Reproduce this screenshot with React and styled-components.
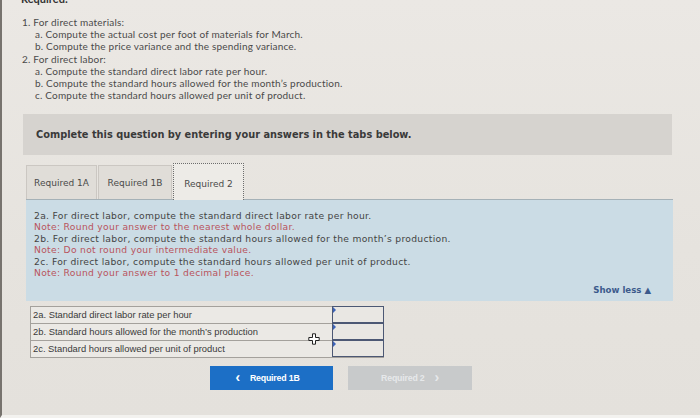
import React from 'react';
import styled, { createGlobalStyle } from 'styled-components';

const GlobalStyle = createGlobalStyle`
  html, body {
    margin: 0;
    padding: 0;
    background: #e7e4df;
  }
`;

const instructions = [
  { text: '1. For direct materials:', level: 0 },
  { text: 'a. Compute the actual cost per foot of materials for March.', level: 1 },
  { text: 'b. Compute the price variance and the spending variance.', level: 1 },
  { text: '2. For direct labor:', level: 0 },
  { text: 'a. Compute the standard direct labor rate per hour.', level: 1 },
  { text: 'b. Compute the standard hours allowed for the month’s production.', level: 1 },
  { text: 'c. Compute the standard hours allowed per unit of product.', level: 1 },
];

const panelLines = [
  { text: '2a. For direct labor, compute the standard direct labor rate per hour.' },
  { text: 'Note: Round your answer to the nearest whole dollar.', note: true },
  { text: '2b. For direct labor, compute the standard hours allowed for the month’s production.' },
  { text: 'Note: Do not round your intermediate value.', note: true },
  { text: '2c. For direct labor, compute the standard hours allowed per unit of product.' },
  { text: 'Note: Round your answer to 1 decimal place.', note: true },
];

const rows = [
  '2a. Standard direct labor rate per hour',
  '2b. Standard hours allowed for the month’s production',
  '2c. Standard hours allowed per unit of product',
];

const tabs = [
  { label: 'Required 1A', width: 71 },
  { label: 'Required 1B', width: 74 },
  { label: 'Required 2', width: 71, active: true },
];

const MoveCursor = () => (
  <svg width="12" height="12" viewBox="0 0 12 12">
    <path
      d="M4.5 0.8h3v3.7h3.7v3h-3.7v3.7h-3v-3.7H0.8v-3h3.7z"
      fill="#fff"
      stroke="#222"
      strokeWidth="1"
      strokeLinejoin="round"
    />
  </svg>
);

const App = () => {
  return (
    <>
      <GlobalStyle />
      <Page>
        <Heading>Required:</Heading>
        <Instructions>
          {instructions.map((item) => (
            <Instruction key={item.text} level={item.level}>
              {item.text}
            </Instruction>
          ))}
        </Instructions>

        <PromptBox>
          Complete this question by entering your answers in the tabs below.
        </PromptBox>

        <TabBar>
          {tabs.map((t) => (
            <Tab key={t.label} $active={t.active} $width={t.width}>
              {t.label}
            </Tab>
          ))}
        </TabBar>

        <Panel>
          {panelLines.map((l) => (
            <PanelLine key={l.text} $note={l.note}>
              {l.text}
            </PanelLine>
          ))}
          <ShowLess>Show less ▲</ShowLess>
        </Panel>

        <AnswerTable>
          {rows.map((r) => (
            <AnswerRow key={r}>
              <Label>{r}</Label>
              <InputCell>
                <Marker />
              </InputCell>
            </AnswerRow>
          ))}
          <CursorWrap>
            <MoveCursor />
          </CursorWrap>
        </AnswerTable>

        <NavRow>
          <NavButton $primary>
            <Chevron>‹</Chevron>
            Required 1B
          </NavButton>
          <NavButton>
            Required 2
            <Chevron>›</Chevron>
          </NavButton>
        </NavRow>
      </Page>
    </>
  );
};

export default App;

const Page = styled.div`
  width: 700px;
  height: 418px;
  box-sizing: border-box;
  border-left: 2px solid #77736e;
  border-bottom: 3px solid #f3f2ef;
  padding: 0 28px 0 19px;
  overflow: hidden;
  background: linear-gradient(180deg, #ebe8e4 0%, #e6e3de 60%, #e4e1dc 100%);
  font-family: Lato, 'Open Sans', sans-serif;
  color: #444;
`;

const Heading = styled.div`
  margin-top: -7px;
  font-family: Lato, sans-serif;
  font-weight: 700;
  font-size: 11px;
  line-height: 12px;
  color: #333;
`;

const Instructions = styled.div`
  margin-top: 11px;
  display: flex;
  flex-direction: column;
`;

const Instruction = styled.div`
  font-size: 10px;
  letter-spacing: 0.2px;
  line-height: 12.2px;
  padding-left: ${(p) => (p.level ? 14 : 1)}px;
  color: #4a4a4a;
  white-space: nowrap;
`;

const PromptBox = styled.div`
  margin-top: 13px;
  margin-left: 2px;
  height: 41px;
  display: flex;
  align-items: center;
  padding-left: 13px;
  background: #d6d3cf;
  font-family: 'DejaVu Sans', Verdana, sans-serif;
  font-weight: 700;
  font-size: 9.8px;
  color: #3a3a3a;
`;

const TabBar = styled.div`
  display: flex;
  align-items: flex-end;
  margin-top: 7px;
  margin-left: 5px;
  height: 37px;
  gap: 1px;
`;

const Tab = styled.div`
  width: ${(p) => p.$width}px;
  height: ${(p) => (p.$active ? 37 : 34)}px;
  box-sizing: border-box;
  display: flex;
  align-items: center;
  justify-content: center;
  font-family: 'DejaVu Sans', Verdana, sans-serif;
  font-size: 9px;
  color: #4a4a4a;
  background: ${(p) => (p.$active ? '#edebe7' : '#e0ddd8')};
  border: ${(p) => (p.$active ? '1px dotted #6c6c6c' : '1px solid #cbc7c2')};
  border-bottom: none;
  padding-top: ${(p) => (p.$active ? 3 : 0)}px;
  position: relative;
  z-index: ${(p) => (p.$active ? 1 : 0)};
  margin-bottom: ${(p) => (p.$active ? -1 : 0)}px;
`;

const Panel = styled.div`
  margin-left: 5px;
  width: 647px;
  box-sizing: border-box;
  background: #cbdce5;
  border-top: 1px solid #a5b1b7;
  padding: 9.5px 0 5px 8px;
  font-family: 'DejaVu Sans', Verdana, sans-serif;
`;

const PanelLine = styled.div`
  font-size: 9.2px;
  letter-spacing: 0.3px;
  line-height: 11.5px;
  color: ${(p) => (p.$note ? '#b9545d' : '#444')};
  white-space: nowrap;
`;

const ShowLess = styled.div`
  margin-top: 6px;
  padding-right: 22px;
  text-align: right;
  font-weight: 700;
  font-size: 8.6px;
  line-height: 11px;
  color: #3c5a8c;
`;

const AnswerTable = styled.div`
  position: relative;
  margin-top: 5px;
  margin-left: 9px;
  width: 352px;
  display: flex;
  flex-direction: column;
  border: 1px solid #a4a19c;
  background: #ebe9e5;
`;

const AnswerRow = styled.div`
  display: flex;
  height: 16px;
  & + & {
    border-top: 1px solid #a4a19c;
  }
`;

const Label = styled.div`
  flex: 1;
  display: flex;
  align-items: center;
  padding-left: 2px;
  font-family: 'Liberation Sans', Arial, sans-serif;
  font-size: 9.4px;
  color: #3a3a3a;
  white-space: nowrap;
`;

const InputCell = styled.div`
  position: relative;
  width: 52px;
  box-sizing: border-box;
  border: 1.5px solid #4c5874;
  margin: -1px -1px 0 0;
  background: #e9e7e3;
`;

const Marker = styled.span`
  position: absolute;
  left: 0;
  top: 0;
  width: 0;
  height: 0;
  border-top: 3px solid transparent;
  border-bottom: 3px solid transparent;
  border-left: 3px solid #3c63b8;
`;

const CursorWrap = styled.div`
  position: absolute;
  left: 277px;
  top: 26px;
  line-height: 0;
`;

const NavRow = styled.div`
  display: flex;
  gap: 15px;
  margin-top: 8px;
  padding-left: 189px;
`;

const NavButton = styled.div`
  width: ${(p) => (p.$primary ? 123 : 124)}px;
  height: 24px;
  display: flex;
  align-items: center;
  justify-content: center;
  gap: 10px;
  font-family: 'Liberation Sans', Arial, sans-serif;
  font-weight: 700;
  font-size: 8.8px;
  letter-spacing: -0.2px;
  background: ${(p) => (p.$primary ? '#1c6fc6' : '#c8cacb')};
  color: ${(p) => (p.$primary ? '#ffffff' : '#e6e8ea')};
  padding-right: ${(p) => (p.$primary ? 8 : 0)}px;
  box-sizing: border-box;
`;

const Chevron = styled.span`
  font-size: 14px;
  line-height: 1;
  margin-top: -2px;
`;
